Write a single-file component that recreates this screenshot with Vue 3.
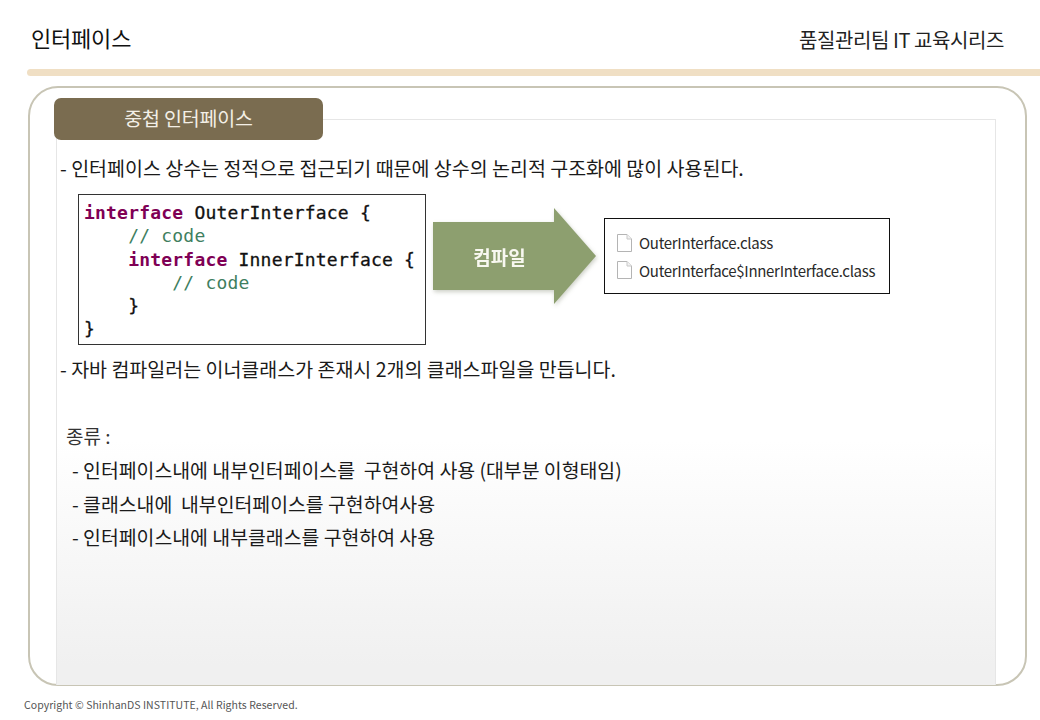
<script setup>
const files = ['OuterInterface.class', 'OuterInterface$InnerInterface.class']
const kinds = [
  '- 인터페이스내에 내부인터페이스를  구현하여 사용 (대부분 이형태임)',
  '- 클래스내에  내부인터페이스를 구현하여사용',
  '- 인터페이스내에 내부클래스를 구현하여 사용'
]
</script>

<template>
  <div class="page">
    <header class="head">
      <h1 class="title">인터페이스</h1>
      <div class="series">품질관리팀 IT 교육시리즈</div>
    </header>
    <div class="rule"></div>
    <main class="frame">
      <div class="tab">중첩 인터페이스</div>
      <section class="sheet">
        <p class="line first">- 인터페이스 상수는 정적으로 접근되기 때문에 상수의 논리적 구조화에 많이 사용된다.</p>
        <div class="figure">
          <pre class="code"><b class="kw">interface</b> <span class="nm">OuterInterface {</span>
    <span class="cm">// code</span>
    <b class="kw">interface</b> <span class="nm">InnerInterface {</span>
        <span class="cm">// code</span>
    <span class="nm">}</span>
<span class="nm">}</span></pre>
          <div class="arrow-wrap"><div class="arrow">컴파일</div></div>
          <div class="files">
            <div v-for="f in files" :key="f" class="file">
              <svg width="15" height="18" viewBox="0 0 15 18">
                <path d="M.5.5H10L14.500 5V17.500H.5Z" fill="#fff" stroke="#b4b4b4" />
                <path d="M10 .5V5H14.500" fill="#f2f2f2" stroke="#c8c8c8" />
              </svg>
              <span>{{ f }}</span>
            </div>
          </div>
        </div>
        <p class="line second">- 자바 컴파일러는 이너클래스가 존재시 2개의 클래스파일을 만듭니다.</p>
        <p class="kind-title">종류 :</p>
        <ul class="kinds">
          <li v-for="k in kinds" :key="k">{{ k }}</li>
        </ul>
      </section>
    </main>
    <footer class="copy">Copyright © ShinhanDS INSTITUTE, All Rights Reserved.</footer>
  </div>
</template>

<style>
html, body { margin: 0; background: #fff; }
</style>

<style scoped>
.page {
  width: 1040px;
  height: 720px;
  overflow: hidden;
  font-family: "Noto Sans CJK KR", "Noto Sans", sans-serif;
  color: #1c1c1c;
}
.head {
  height: 69px;
  box-sizing: border-box;
  padding: 22px 36px 0 31px;
  display: flex;
  justify-content: space-between;
  align-items: flex-start;
}
.title {
  margin: 0;
  font-size: 22px;
  line-height: 30px;
  font-weight: 400;
  letter-spacing: -.2px;
  color: #111;
}
.series {
  margin-top: 3px;
  font-size: 20px;
  line-height: 30px;
  letter-spacing: -.42px;
  color: #222;
}
.rule {
  height: 7px;
  margin-left: 27px;
  background: #f0dfc4;
  border-radius: 4px 0 0 4px;
}
.frame {
  box-sizing: border-box;
  width: 999px;
  height: 600px;
  margin: 10px 0 0 28px;
  border: 2px solid #c8c5b5;
  border-radius: 30px;
  padding: 10px 29px 0 24px;
  position: relative;
}
.tab {
  position: relative;
  z-index: 1;
  box-sizing: border-box;
  width: 269px;
  height: 42px;
  background: #7a6c50;
  border-radius: 7px;
  color: #f3efe6;
  font-size: 19.500px;
  line-height: 40px;
  text-align: center;
  letter-spacing: -.15px;
}
.sheet {
  box-sizing: border-box;
  margin: -21px 0 0 2px;
  height: 566px;
  border: 1px solid #e6e6e6;
  border-bottom: 0;
  background: linear-gradient(#fff 0, #fff 320px, #f0f0f0 545px);
  padding: 0 0 0 3px;
}
.line {
  margin: 0;
  font-size: 19.500px;
  line-height: 26px;
  color: #1a1a1a;
}
.first { padding-top: 35px; }
.figure {
  display: flex;
  align-items: flex-start;
  margin: 13px 0 0 18px;
}
.code {
  box-sizing: border-box;
  width: 348px;
  height: 151px;
  margin: 0;
  padding: 6px 0 0 5px;
  background: #fff;
  border: 1px solid #333;
  font-family: "DejaVu Sans Mono", "Liberation Mono", monospace;
  font-size: 18px;
  line-height: 23.300px;
  letter-spacing: .2px;
  color: #111;
}
.kw { color: #7f0055; font-weight: 700; }
.nm { -webkit-text-stroke: .3px #111; }
.cm { color: #3f7f5f; }
.arrow-wrap {
  margin: 14px 0 0 7px;
  filter: drop-shadow(1px 2px 2px rgba(90, 100, 70, .3));
}
.arrow {
  width: 163px;
  height: 96px;
  padding-right: 30px;
  box-sizing: border-box;
  background: #8d9f6f;
  clip-path: polygon(0 14px, 121px 14px, 121px 0, 163px 48px, 121px 96px, 121px 82px, 0 82px);
  color: #f8f8f0;
  font-size: 19px;
  font-weight: 700;
  line-height: 98px;
  text-align: center;
}
.files {
  box-sizing: border-box;
  width: 286px;
  height: 76px;
  margin: 24px 0 0 8px;
  padding: 10px 0 0 12px;
  background: #fff;
  border: 1px solid #111;
}
.file {
  display: flex;
  align-items: center;
  gap: 7px;
  height: 27.500px;
  font-size: 15px;
  letter-spacing: -.3px;
  color: #2a2a2a;
}
.second { padding-top: 11px; }
.kind-title {
  margin: 41px 0 0 6px;
  font-size: 19px;
  line-height: 26px;
  color: #333;
}
.kinds {
  list-style: none;
  margin: 4px 0 0 12px;
  padding: 0;
}
.kinds li {
  font-size: 19.400px;
  line-height: 33.500px;
  white-space: pre;
  color: #1a1a1a;
}
.copy {
  margin: 11px 0 0 24px;
  font-size: 10.500px;
  line-height: 16px;
  letter-spacing: .04px;
  color: #555;
}
</style>
